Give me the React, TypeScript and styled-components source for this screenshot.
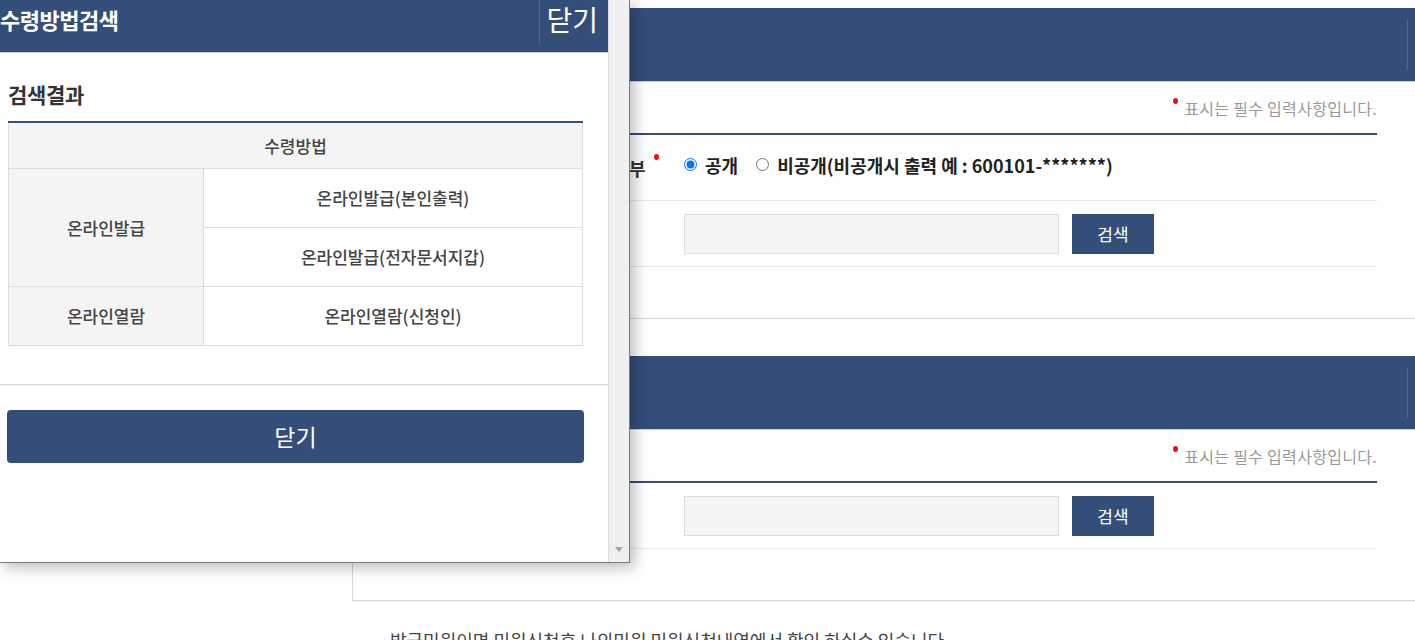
import React from 'react';
import styled, {createGlobalStyle} from 'styled-components';

const NAVY = '#344e7a';

const GlobalStyle = createGlobalStyle`
    * {
        box-sizing: border-box;
    }

    body {
        margin: 0;
        overflow: hidden;
        background: #fff;
        font-family: "Noto Sans CJK KR", "Noto Sans", sans-serif;
        color: #333;
    }
`;

export default function App() {
    return (
        <Page>
            <GlobalStyle/>
            <Main>
                <Section $first>
                    <Bar>
                        <BarDivider/>
                    </Bar>
                    <Content>
                        <Note>
                            <Dot $lift={14}/>
                            표시는 필수 입력사항입니다.
                        </Note>
                        <FormTable>
                            <FormRow>
                                <Label>
                                    주민등록번호 공개여부
                                    <Dot $lift={22}/>
                                </Label>
                                <Field $raise>
                                    <RadioLabel>
                                        <input type="radio" name="open" defaultChecked/>
                                        공개
                                    </RadioLabel>
                                    <RadioLabel>
                                        <input type="radio" name="open"/>
                                        비공개(비공개시 출력 예 : 600101-*******)
                                    </RadioLabel>
                                </Field>
                            </FormRow>
                            <FormRow>
                                <Label>수령방법</Label>
                                <Field>
                                    <SearchInput readOnly/>
                                    <SearchButton>검색</SearchButton>
                                </Field>
                            </FormRow>
                        </FormTable>
                    </Content>
                </Section>

                <Section>
                    <Bar>
                        <BarDivider/>
                    </Bar>
                    <Content>
                        <Note>
                            <Dot $lift={14}/>
                            표시는 필수 입력사항입니다.
                        </Note>
                        <FormTable>
                            <FormRow>
                                <Label>수령방법</Label>
                                <Field>
                                    <SearchInput readOnly/>
                                    <SearchButton>검색</SearchButton>
                                </Field>
                            </FormRow>
                        </FormTable>
                    </Content>
                </Section>

                <Footnote>발급민원이면 민원신청후 나의민원 민원신청내역에서 확인 하실수 있습니다.</Footnote>
            </Main>

            <Popup>
                <PopupScroll>
                    <PopupHeader>
                        <PopupTitle>수령방법검색</PopupTitle>
                        <HeaderClose>닫기</HeaderClose>
                    </PopupHeader>
                    <PopupBody>
                        <ResultTitle>검색결과</ResultTitle>
                        <ResultTable>
                            <thead>
                            <tr>
                                <HeadCell colSpan={2}>수령방법</HeadCell>
                            </tr>
                            </thead>
                            <tbody>
                            <tr>
                                <GroupCell rowSpan={2}>온라인발급</GroupCell>
                                <Cell>온라인발급(본인출력)</Cell>
                            </tr>
                            <tr>
                                <Cell>온라인발급(전자문서지갑)</Cell>
                            </tr>
                            <tr>
                                <GroupCell>온라인열람</GroupCell>
                                <Cell>온라인열람(신청인)</Cell>
                            </tr>
                            </tbody>
                        </ResultTable>
                    </PopupBody>
                    <PopupFooter>
                        <CloseButton>닫기</CloseButton>
                    </PopupFooter>
                </PopupScroll>
                <ScrollTrack>
                    <ScrollArrow/>
                </ScrollTrack>
            </Popup>
        </Page>
    );
}

const Page = styled.div`
    position: relative;
    width: 100%;
    height: 640px;
    overflow: hidden;
`;

const Main = styled.div`
    margin-left: 352px;
    width: 1100px;
`;

const Section = styled.section<{ $first?: boolean }>`
    padding-top: ${p => (p.$first ? '8px' : '37px')};
    padding-bottom: 51px;
    border-left: 1px solid #d5d5d5;
    border-bottom: 1px solid #d5d5d5;
`;

const Bar = styled.div`
    height: 74px;
    background: ${NAVY};
    border-bottom: 1px solid #d0d0d0;
    display: flex;
    align-items: center;
    justify-content: flex-end;
    padding-right: 44px;
`;

const BarDivider = styled.span`
    width: 1px;
    height: 50px;
    background: rgba(255, 255, 255, 0.15);
`;

const Content = styled.div`
    padding: 0 75px 0 20px;
`;

const Note = styled.div`
    height: 51px;
    display: flex;
    align-items: center;
    justify-content: flex-end;
    gap: 6px;
    font-size: 16px;
    color: #999;
    letter-spacing: 0.3px;
`;

const Dot = styled.span<{ $lift: number }>`
    display: inline-block;
    width: 5px;
    height: 6px;
    border-radius: 50%;
    background: #ee1111;
    margin-bottom: ${p => p.$lift}px;
`;

const FormTable = styled.div`
    border-top: 2px solid ${NAVY};
`;

const FormRow = styled.div`
    display: flex;
    align-items: center;
    height: 66px;
    border-bottom: 1px solid #e6e6e6;
`;

const Label = styled.div`
    width: 311px;
    padding-left: 103px;
    display: flex;
    align-items: center;
    gap: 8px;
    font-size: 18px;
    font-weight: 700;
    color: #333;
    white-space: nowrap;
`;

const Field = styled.div<{ $raise?: boolean }>`
    display: flex;
    align-items: center;
    gap: 13px;
    padding-bottom: ${p => (p.$raise ? '6px' : '0')};
`;

const RadioLabel = styled.label`
    display: flex;
    align-items: center;
    gap: 8px;
    margin-right: 5px;
    font-size: 18px;
    font-weight: 700;
    color: #222;

    input {
        margin: 0;
        width: 13px;
        height: 13px;
    }
`;

const SearchInput = styled.input`
    width: 375px;
    height: 40px;
    background: #f4f4f4;
    border: 1px solid #dcdcdc;
    outline: none;
`;

const SearchButton = styled.button`
    width: 82px;
    height: 40px;
    border: none;
    background: ${NAVY};
    color: #fff;
    font-family: inherit;
    font-size: 17px;
    cursor: pointer;
`;

const Footnote = styled.p`
    margin: 26px 0 0 38px;
    font-size: 18px;
    line-height: 26px;
    color: #444;
`;

/* popup */

const Popup = styled.div`
    position: absolute;
    top: 0;
    left: 0;
    width: 630px;
    height: 563px;
    display: flex;
    background: #fff;
    border-right: 1px solid #7a7a7a;
    border-bottom: 1px solid #7a7a7a;
    box-shadow: 4px 4px 14px rgba(0, 0, 0, 0.28);
`;

const PopupScroll = styled.div`
    width: 609px;
    border-right: 1px solid #dcdcdc;
`;

const ScrollTrack = styled.div`
    flex: 1;
    background: #f0f0f0;
    display: flex;
    align-items: flex-end;
    justify-content: center;
    padding-bottom: 10px;
`;

const ScrollArrow = styled.span`
    width: 0;
    height: 0;
    border-left: 4px solid transparent;
    border-right: 4px solid transparent;
    border-top: 5px solid #a3a3a3;
`;

const PopupHeader = styled.div`
    height: 53px;
    background: ${NAVY};
    border-bottom: 1px solid #cfcfcf;
    display: flex;
    align-items: flex-start;
    justify-content: space-between;
    color: #fff;
`;

const PopupTitle = styled.h2`
    margin: 0;
    font-size: 22px;
    font-weight: 700;
    line-height: 38px;
    letter-spacing: -0.5px;
`;

const HeaderClose = styled.button`
    height: 44px;
    padding: 0 10px 6px 6px;
    border: none;
    border-left: 1px solid rgba(255, 255, 255, 0.18);
    background: transparent;
    color: #fff;
    font-family: inherit;
    font-size: 28px;
    line-height: 38px;
    cursor: pointer;
`;

const PopupBody = styled.div`
    padding: 27px 25px 38px 8px;
    border-bottom: 1px solid #d5d5d5;
`;

const ResultTitle = styled.h3`
    margin: 0 0 13px;
    font-size: 21px;
    font-weight: 700;
    line-height: 28px;
    letter-spacing: -0.3px;
    color: #333;
`;

const ResultTable = styled.table`
    width: 575px;
    border-collapse: collapse;
    border-top: 2px solid ${NAVY};
    font-size: 17px;
    font-weight: 500;
    color: #444;
    text-align: center;

    td, th {
        border: 1px solid #dcdcdc;
        padding: 0;
    }
`;

const HeadCell = styled.th`
    height: 46px;
    background: #f4f4f4;
    font-weight: 500;
`;

const GroupCell = styled.td`
    width: 195px;
    background: #f4f4f4;
`;

const Cell = styled.td`
    height: 59px;
    background: #fff;
`;

const PopupFooter = styled.div`
    padding: 25px 24px 0 7px;
`;

const CloseButton = styled.button`
    width: 577px;
    height: 53px;
    border: none;
    border-radius: 4px;
    background: ${NAVY};
    color: #fff;
    font-family: inherit;
    font-size: 23px;
    cursor: pointer;
`;
